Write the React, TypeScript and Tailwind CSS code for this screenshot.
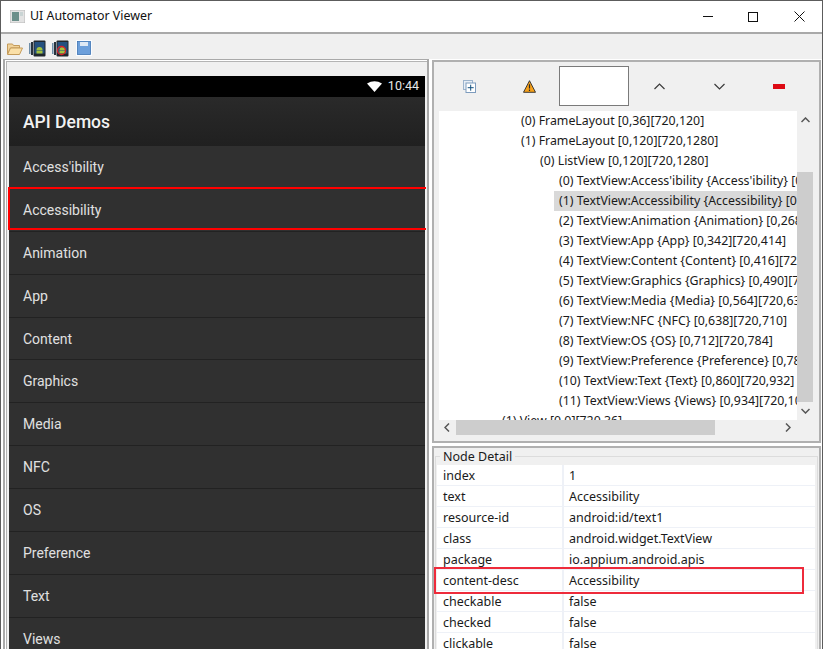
const treeRows = [
  { depth: 520, label: "(0) FrameLayout [0,36][720,120]" },
  { depth: 520, label: "(1) FrameLayout [0,120][720,1280]" },
  { depth: 539, label: "(0) ListView [0,120][720,1280]" },
  { depth: 558, label: "(0) TextView:Access'ibility {Access'ibility} [0,120][720,192]" },
  { depth: 558, label: "(1) TextView:Accessibility {Accessibility} [0,194][720,266]", selected: true },
  { depth: 558, label: "(2) TextView:Animation {Animation} [0,268][720,340]" },
  { depth: 558, label: "(3) TextView:App {App} [0,342][720,414]" },
  { depth: 558, label: "(4) TextView:Content {Content} [0,416][720,488]" },
  { depth: 558, label: "(5) TextView:Graphics {Graphics} [0,490][720,562]" },
  { depth: 558, label: "(6) TextView:Media {Media} [0,564][720,636]" },
  { depth: 558, label: "(7) TextView:NFC {NFC} [0,638][720,710]" },
  { depth: 558, label: "(8) TextView:OS {OS} [0,712][720,784]" },
  { depth: 558, label: "(9) TextView:Preference {Preference} [0,786][720,858]" },
  { depth: 558, label: "(10) TextView:Text {Text} [0,860][720,932]" },
  { depth: 558, label: "(11) TextView:Views {Views} [0,934][720,1006]" },
  { depth: 501, label: "(1) View [0,0][720,36]" },
];

const listItems = ["Access'ibility", "Accessibility", "Animation", "App", "Content", "Graphics", "Media", "NFC", "OS", "Preference", "Text", "Views"];

const details = [
  ["index", "1"],
  ["text", "Accessibility"],
  ["resource-id", "android:id/text1"],
  ["class", "android.widget.TextView"],
  ["package", "io.appium.android.apis"],
  ["content-desc", "Accessibility"],
  ["checkable", "false"],
  ["checked", "false"],
  ["clickable", "false"],
];

function PhoneIcon({ stop }: { stop?: boolean }) {
  return (
    <svg width="17" height="17" viewBox="0 0 17 17">
      <rect x="0" y="3" width="1.5" height="11" fill="#6f8ea8" />
      <rect x="2" y="2" width="2" height="13" fill="#28333d" />
      <rect x="4.5" y="0.5" width="12" height="16" rx="1" fill="#20262c" />
      <rect x="5.5" y="2" width="10" height="11.5" fill="#24507f" />
      <path d="M7.5 10 a3 3 0 0 1 6 0 z" fill="#a3c23f" />
      <rect x="7.5" y="10.5" width="6" height="3" fill="#a3c23f" />
      {stop && <circle cx="9.5" cy="10.5" r="4" fill="none" stroke="#dc1f26" strokeWidth="1.3" />}
    </svg>
  );
}

function ToolbarIcons() {
  return (
    <div className="flex h-[25px] items-center gap-[6px] bg-[#f0f0f0] pl-[6px] pt-[3px]">
      <svg width="16" height="15" viewBox="0 0 16 15">
        <path d="M0.5 3 h5 l1 1.5 h6 v2.5 H3.5 L0.5 13 z" fill="#f0d29a" stroke="#c49b5a" />
        <path d="M3.5 7 H15.5 L12.5 13.5 H0.5 z" fill="#fbe0a8" stroke="#c49b5a" />
      </svg>
      <PhoneIcon />
      <PhoneIcon stop />
      <svg className="ml-[1px]" width="16" height="16" viewBox="0 0 16 16">
        <rect x="0" y="0" width="16" height="16" fill="#fafcff" />
        <rect x="1.5" y="1.5" width="13" height="13" fill="#6c9fdb" stroke="#3f74b3" strokeWidth="0.8" />
        <rect x="4" y="2" width="8" height="4" fill="#dfe9f5" />
      </svg>
    </div>
  );
}

function TreeToolbar() {
  return (
    <div className="flex h-[49px] items-center bg-[#f0f0f0] pb-[1px]">
      <svg className="ml-[29px]" width="13" height="13" viewBox="0 0 13 13">
        <rect x="0.5" y="0.5" width="9" height="9" fill="#e8eef5" stroke="#9db4cd" />
        <rect x="3" y="3" width="9.5" height="9.5" fill="#fff" stroke="#7d9bbd" />
        <path d="M7.7 4.7 v6 M4.7 7.7 h6" stroke="#14527f" strokeWidth="1" />
      </svg>
      <svg className="ml-[47px]" width="13" height="13" viewBox="0 0 13 13">
        <path d="M6.5 0.7 L12.5 12.3 H0.5 z" fill="#f7a11a" stroke="#2a2a2a" strokeWidth="0.9" />
        <path d="M6.5 4.2 v4.4 M6.5 9.6 v1.4" stroke="#2a2a2a" strokeWidth="1.2" />
      </svg>
      <div className="ml-[23px] h-[40px] w-[70px] border border-[#7a7a7a] bg-white" />
      <svg className="ml-[25px]" width="11" height="7" viewBox="0 0 11 7">
        <path d="M0.5 6 L5.5 1 L10.5 6" fill="none" stroke="#3a3a3a" strokeWidth="1.2" />
      </svg>
      <svg className="ml-[49px]" width="11" height="7" viewBox="0 0 11 7">
        <path d="M0.5 1 L5.5 6 L10.5 1" fill="none" stroke="#3a3a3a" strokeWidth="1.2" />
      </svg>
      <div className="ml-[48px] h-[5px] w-[12px] bg-[#dd0a14]" />
    </div>
  );
}

export default function App() {
  return (
    <div className="relative flex h-[649px] w-[823px] flex-col overflow-hidden border-l border-r border-t border-[#5c5c5c] bg-white font-['Noto_Sans',sans-serif] text-[#1a1a1a]">
      {/* title bar */}
      <div className="flex h-[31px] items-center bg-white">
        <svg className="ml-[9px]" width="15" height="13" viewBox="0 0 15 13">
          <rect x="0" y="0" width="15" height="13" fill="#e3e3e3" stroke="#b9b9b9" />
          <rect x="2" y="2" width="7" height="9" fill="#6b8f8a" />
          <rect x="10" y="2" width="3" height="4" fill="#c9d4d4" />
        </svg>
        <span className="ml-[5px] text-[12.4px] leading-none text-[#111]">UI Automator Viewer</span>
        <div className="ml-auto flex items-center">
          <div className="mr-[35px] h-px w-[10px] bg-[#111]" />
          <div className="mr-[36px] h-[10px] w-[10px] border border-[#111]" />
          <svg className="mr-[17px]" width="11" height="11" viewBox="0 0 11 11">
            <path d="M0.5 0.5 L10.5 10.5 M10.5 0.5 L0.5 10.5" stroke="#111" strokeWidth="1" />
          </svg>
        </div>
      </div>
      <div className="h-[2px] bg-[#a9a9a9]" />
      <ToolbarIcons />

      {/* panes */}
      <div className="flex min-h-0 flex-1 bg-white pl-[2px]">
        <div className="mr-[3px] h-[620px] w-[426px] border-2 border-t border-[#a9a9a9] bg-white pl-px pt-px">
          <div className="h-full border-l border-t border-[#b4b4b4] bg-[#f0f0f0] pl-[2px] pt-[14px]">
            <div className="w-[416px]">
              <div className="flex h-[21px] items-center justify-end bg-black pr-[6px] font-['Roboto',sans-serif] text-[12.5px] text-[#e8e8e8]">
                <svg className="mr-[6px]" width="15" height="11" viewBox="0 0 15 11">
                  <path d="M0 2.5 Q7.5 -2 15 2.5 L7.5 11 z" fill="#fff" />
                </svg>
                10:44
              </div>
              <div className="flex h-[49px] items-center bg-gradient-to-b from-[#2a2a2a] to-[#202020] pl-[14px] pt-[2px] font-['Roboto',sans-serif] text-[17.5px] font-medium text-[#f2f2f2]">
                API Demos
              </div>
              {listItems.map((item) => (
                <div key={item} className="flex h-[42.9px] items-center border-b border-[#222] bg-[#303030] pl-[14px] pt-px font-['Roboto',sans-serif] text-[14px] text-[#e0e0e0]">
                  {item}
                </div>
              ))}
            </div>
          </div>
        </div>

        <div className="mt-px flex w-[389px] flex-col gap-[3px]">
          <div className="h-[383px] border-2 border-[#b0b0b0] bg-[#f0f0f0]">
            <TreeToolbar />
            <div className="flex h-[309px] pl-[5px]">
              <div className="w-[358px] overflow-hidden bg-white">
                {treeRows.map((row) => (
                  <div key={row.label} className="flex h-[20px] items-stretch whitespace-nowrap text-[12.35px] leading-none" style={{ paddingLeft: row.depth - 443 }}>
                    <div className={row.selected ? "flex w-full items-center bg-[#d9d9d9] pl-[5px] pt-px" : "flex w-full items-center pl-[5px] pt-px"}>{row.label}</div>
                  </div>
                ))}
              </div>
              <div className="flex w-[16px] flex-col items-center bg-[#f0f0f0]">
                <svg className="mt-[6px] shrink-0" width="9" height="6" viewBox="0 0 9 6">
                  <path d="M0.5 5 L4.5 1 L8.5 5" fill="none" stroke="#555" strokeWidth="1.5" />
                </svg>
                <div className="mt-[49px] h-[230px] w-full shrink-0 bg-[#cdcdcd]" />
                <svg className="mt-[6px] shrink-0" width="9" height="6" viewBox="0 0 9 6">
                  <path d="M0.5 1 L4.5 5 L8.5 1" fill="none" stroke="#555" strokeWidth="1.5" />
                </svg>
              </div>
            </div>
            <div className="flex h-[15px] items-center pl-[10px]">
              <svg width="6" height="9" viewBox="0 0 6 9">
                <path d="M5 0.5 L1 4.5 L5 8.5" fill="none" stroke="#555" strokeWidth="1.5" />
              </svg>
              <div className="ml-[6px] h-[15px] w-[259px] bg-[#cdcdcd]" />
              <svg className="ml-[70px]" width="6" height="9" viewBox="0 0 6 9">
                <path d="M1 0.5 L5 4.5 L1 8.5" fill="none" stroke="#555" strokeWidth="1.5" />
              </svg>
            </div>
          </div>

          <div className="flex-1 overflow-hidden border-2 border-b-0 border-[#b0b0b0] bg-[#f0f0f0] pl-px pr-px pt-[8px]">
            <div className="relative h-full border border-b-0 border-[#dcdcdc] pl-px pr-[2px] pt-[8px]">
              <span className="absolute left-[4px] top-[-8px] bg-[#f0f0f0] px-[3px] text-[12.5px] leading-[16px]">Node Detail</span>
              <div className="bg-white">
                {details.map(([key, value]) => (
                  <div key={key} className="flex h-[21px] items-center border-b border-[#eef1f7] text-[12.5px] leading-none">
                    <div className="flex h-full w-[127px] items-center border-r-2 border-[#eef1f7] pl-[6px] pt-[2px]">{key}</div>
                    <div className="pl-[5px] pt-[2px]">{value}</div>
                  </div>
                ))}
              </div>
            </div>
          </div>
        </div>
      </div>

      {/* annotations drawn over the app */}
      <div className="absolute left-[7px] top-[186px] h-[43px] w-[418px] border-2 border-r-0 border-[#ff0000]" />
      <div className="absolute left-[433px] top-[566px] h-[27px] w-[370px] border-2 border-[#ee2b3b]" />
    </div>
  );
}
